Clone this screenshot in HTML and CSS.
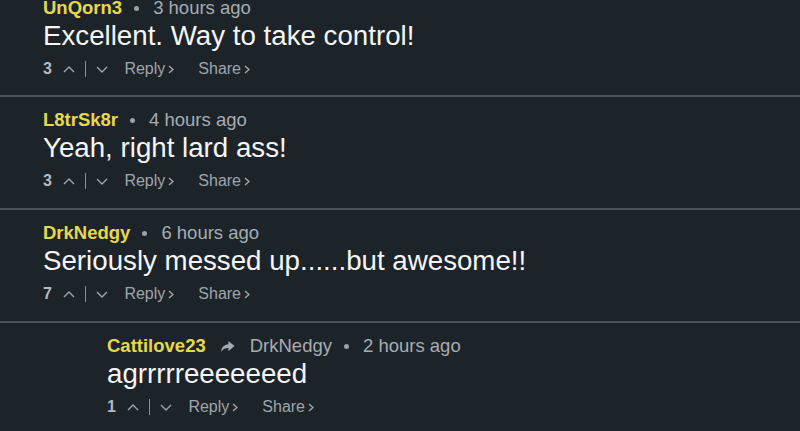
FILE: index.html
```html
<!DOCTYPE html>
<html lang="en">
<head>
    <meta charset="UTF-8">
    <meta name="viewport" content="width=device-width, initial-scale=1.0">
    <title>Comments</title>
    <link rel="stylesheet" href="styles.css">
</head>
<body>
    <div class="thread">
        <div class="comment">
            <div class="meta">
                <span class="user">UnQorn3</span>
                <span class="dot"></span>
                <span class="time">3 hours ago</span>
            </div>
            <div class="text">Excellent. Way to take control!</div>
            <div class="actions">
                <span class="votes">3</span>
                <svg class="chev" width="12" height="7" viewBox="0 0 12 7"><polyline points="1,6 6,1 11,6"/></svg>
                <span class="sep"></span>
                <svg class="chev" width="12" height="7" viewBox="0 0 12 7"><polyline points="1,1 6,6 11,1"/></svg>
                <a class="act reply" href="#">Reply<svg class="arrow" width="6" height="9" viewBox="0 0 6 9"><polyline points="1,1 5,4.5 1,8"/></svg></a>
                <a class="act" href="#">Share<svg class="arrow" width="6" height="9" viewBox="0 0 6 9"><polyline points="1,1 5,4.5 1,8"/></svg></a>
            </div>
        </div>

        <div class="comment">
            <div class="meta">
                <span class="user">L8trSk8r</span>
                <span class="dot"></span>
                <span class="time">4 hours ago</span>
            </div>
            <div class="text">Yeah, right lard ass!</div>
            <div class="actions">
                <span class="votes">3</span>
                <svg class="chev" width="12" height="7" viewBox="0 0 12 7"><polyline points="1,6 6,1 11,6"/></svg>
                <span class="sep"></span>
                <svg class="chev" width="12" height="7" viewBox="0 0 12 7"><polyline points="1,1 6,6 11,1"/></svg>
                <a class="act reply" href="#">Reply<svg class="arrow" width="6" height="9" viewBox="0 0 6 9"><polyline points="1,1 5,4.5 1,8"/></svg></a>
                <a class="act" href="#">Share<svg class="arrow" width="6" height="9" viewBox="0 0 6 9"><polyline points="1,1 5,4.5 1,8"/></svg></a>
            </div>
        </div>

        <div class="comment">
            <div class="meta">
                <span class="user">DrkNedgy</span>
                <span class="dot"></span>
                <span class="time">6 hours ago</span>
            </div>
            <div class="text">Seriously messed up......but awesome!!</div>
            <div class="actions">
                <span class="votes">7</span>
                <svg class="chev" width="12" height="7" viewBox="0 0 12 7"><polyline points="1,6 6,1 11,6"/></svg>
                <span class="sep"></span>
                <svg class="chev" width="12" height="7" viewBox="0 0 12 7"><polyline points="1,1 6,6 11,1"/></svg>
                <a class="act reply" href="#">Reply<svg class="arrow" width="6" height="9" viewBox="0 0 6 9"><polyline points="1,1 5,4.5 1,8"/></svg></a>
                <a class="act" href="#">Share<svg class="arrow" width="6" height="9" viewBox="0 0 6 9"><polyline points="1,1 5,4.5 1,8"/></svg></a>
            </div>
        </div>

        <!-- reply to DrkNedgy -->
        <div class="comment nested">
            <div class="meta">
                <span class="user">Cattilove23</span>
                <svg class="to" width="15" height="13" viewBox="0 0 16 14"><path d="M9 1 L15.5 6.5 L9 12 V8.6 C5.2 8.5 2.8 9.8 1 12.8 C1.6 8 4.2 5 9 4.6 Z"/></svg>
                <span class="parent">DrkNedgy</span>
                <span class="dot"></span>
                <span class="time">2 hours ago</span>
            </div>
            <div class="text">agrrrrreeeeeeed</div>
            <div class="actions">
                <span class="votes">1</span>
                <svg class="chev" width="12" height="7" viewBox="0 0 12 7"><polyline points="1,6 6,1 11,6"/></svg>
                <span class="sep"></span>
                <svg class="chev" width="12" height="7" viewBox="0 0 12 7"><polyline points="1,1 6,6 11,1"/></svg>
                <a class="act reply" href="#">Reply<svg class="arrow" width="6" height="9" viewBox="0 0 6 9"><polyline points="1,1 5,4.5 1,8"/></svg></a>
                <a class="act" href="#">Share<svg class="arrow" width="6" height="9" viewBox="0 0 6 9"><polyline points="1,1 5,4.5 1,8"/></svg></a>
            </div>
        </div>
    </div>
</body>
</html>
```

FILE: styles.css
```css
body {
    margin: 0;
    padding: 0;
    background-color: #1d2429;
    font-family: "Liberation Sans", Arial, sans-serif;
    overflow: hidden;
}
.thread {
    margin-top: -15px; /* first comment is scrolled partly off screen */
}
.comment {
    padding: 11px 0 16px 43px;
    border-bottom: 2px solid #4a5259;
}
.comment:first-child {
    padding-bottom: 15px;
}
.comment.nested {
    padding-left: 107px;
}
.meta {
    display: flex;
    align-items: center;
    height: 24px;
    font-size: 18.5px;
    color: #a7acb1;
}
.user {
    color: #e6d84c;
    font-weight: bold;
}
.dot {
    width: 5px;
    height: 5px;
    border-radius: 50%;
    background-color: #9ca2a7;
    margin: 0 14px 0 12px;
}
.to {
    fill: #a7acb1;
    margin: 0 15px 0 14px;
}
.text {
    color: #f5f5f5;
    font-size: 27.7px;
    line-height: 32px;
    white-space: nowrap;
}
.actions {
    display: flex;
    align-items: center;
    height: 22px;
    margin-top: 6px;
    font-size: 16px;
    color: #9fa5ab;
}
.votes {
    font-weight: bold;
    color: #b5b9bd;
    margin-right: 11px;
}
.chev {
    fill: none;
    stroke: #9fa5ab;
    stroke-width: 1.4;
}
.sep {
    width: 1.5px;
    height: 16px;
    background-color: #8a9096;
    margin: 0 10px;
}
.act {
    color: #9fa5ab;
    text-decoration: none;
    display: flex;
    align-items: center;
}
.act.reply {
    margin-left: 16px;
    margin-right: 24px;
}
.arrow {
    fill: none;
    stroke: #9fa5ab;
    stroke-width: 1.5;
    margin-left: 3px;
}
```
